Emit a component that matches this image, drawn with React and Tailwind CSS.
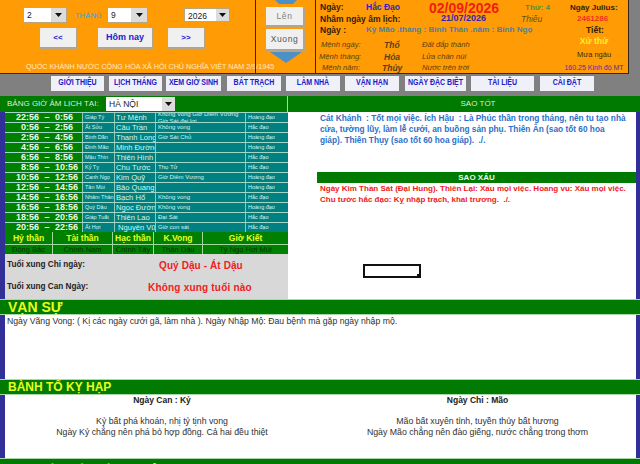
import React from "react";

const rows = [
  ["22:56", "0:56", "Giáp Tý", "Tư Mệnh", "Không Vong Giờ Diêm Vương Giờ Sát đại lợi", "Hoàng đạo"],
  ["0:56", "2:56", "Ất Sửu", "Câu Trần", "Không vong", "Hắc đạo"],
  ["2:56", "4:56", "Bính Dần", "Thanh Long", "Giờ Sát Chủ", "Hoàng đạo"],
  ["4:56", "6:56", "Đinh Mão", "Minh Đường", "", "Hoàng đạo"],
  ["6:56", "8:56", "Mậu Thìn", "Thiên Hình", "", "Hắc đạo"],
  ["8:56", "10:56", "Kỷ Tỵ", "Chu Tước", "Thọ Tử", "Hắc đạo"],
  ["10:56", "12:56", "Canh Ngọ", "Kim Quỹ", "Giờ Diêm Vương", "Hoàng đạo"],
  ["12:56", "14:56", "Tân Mùi", "Bảo Quang", "", "Hoàng đạo"],
  ["14:56", "16:56", "Nhâm Thân", "Bạch Hổ", "Không vong", "Hắc đạo"],
  ["16:56", "18:56", "Quý Dậu", "Ngọc Đường", "Không vong", "Hoàng đạo"],
  ["18:56", "20:56", "Giáp Tuất", "Thiên Lao", "Đại Sát", "Hắc đạo"],
  ["20:56", "22:56", "Ất Hợi", "Nguyên Vũ", "Giờ con sát", "Hắc đạo"],
];

const nav = [
  ["GIỚI THIỆU", "w-[53px] ml-[51px]"],
  ["LỊCH THÁNG", "w-[53px] ml-[5px]"],
  ["XEM GIỜ SINH", "w-[55px] ml-[4px]"],
  ["BÁT TRẠCH", "w-[54px] ml-[6px]"],
  ["LÀM NHÀ", "w-[54px] ml-[5px]"],
  ["VẬN HẠN", "w-[54px] ml-[5px]"],
  ["NGÀY ĐẶC BIỆT", "w-[61px] ml-[6px]"],
  ["TÀI LIỆU", "w-[63px] ml-[5px]"],
  ["CÀI ĐẶT", "w-[54px] ml-[6px]"],
];

function Select({ value, w, arrow, h = "h-[16px]" }) {
  return (
    <div className={`flex items-stretch border border-[#b8a67e] bg-white ${w} ${h}`}>
      <span className="flex-1 pl-[3px] text-[8.5px] leading-[14px] text-[#222]">{value}</span>
      <span className={`flex items-center justify-center bg-[#dcdcdc] ${arrow}`}>
        <svg width="7" height="4" viewBox="0 0 7 4"><path d="M0 0h7L3.5 4z" fill="#111" /></svg>
      </span>
    </div>
  );
}

function Btn({ children, className, color = "text-[#2020d0] font-bold" }) {
  return (
    <div className={`flex items-center justify-center border-b-2 border-r-2 border-[#b3a58a] bg-[#f0f0f0] ${color} ${className}`}>
      {children}
    </div>
  );
}

function Band({ children, size }) {
  return (
    <div className={`flex h-[16px] items-center border-y border-[#a8d8a8] bg-[#007a00] pl-[8px] font-bold leading-none text-[#e8ff20] ${size}`}>
      {children}
    </div>
  );
}

export default function App() {
  return (
    <div className="relative h-[464px] w-[640px] overflow-hidden bg-white font-['Liberation_Sans',sans-serif]">
      {/* Header */}
      <div className="flex h-[74px] bg-[#808080]">
        <div className="flex w-[629px] border-b border-[#33261a] bg-[#ff9c05]">
          <div className="flex w-[255px] flex-col">
            <div className="flex h-[28px] items-center pl-[23px] pt-[2px]">
              <Select value="2" w="w-[44px]" arrow="w-[15px]" />
              <span className="ml-[8px] w-[32px] text-[7.5px] font-bold leading-[15px] text-[#5fa8b8]">THÁNG</span>
              <Select value="9" w="w-[41px]" arrow="w-[16px]" />
              <span className="w-[36px]" />
              <Select value="2026" w="w-[46px]" arrow="w-[13px]" h="h-[14px]" />
            </div>
            <div className="flex items-start pl-[40px] text-[8px]">
              <Btn className="h-[21px] w-[38px]">&lt;&lt;</Btn>
              <Btn className="ml-[20px] h-[21px] w-[56px] text-[9px]">Hôm nay</Btn>
              <Btn className="ml-[14px] h-[21px] w-[38px]">&gt;&gt;</Btn>
            </div>
            <div className="mt-[13px] whitespace-nowrap pl-[26px] text-[7.2px] leading-[10px] text-[#ffe9c0]">
              QUỐC KHÁNH NƯỚC CỘNG HÒA XÃ HỘI CHỦ NGHĨA VIỆT NAM 2/9/1945
            </div>
          </div>
          <div className="flex w-[61px] flex-col items-center border-x border-[#33261a]">
            <svg width="32" height="4" viewBox="0 0 32 4"><path d="M5 0h22l-4 4H9z" fill="#4d90c8" /></svg>
            <Btn className="mt-[3px] h-[20px] w-[39px] text-[8.5px] tracking-[0.6px]" color="text-[#808080]">Lên</Btn>
            <Btn className="mt-[2px] h-[22px] w-[39px] text-[8.5px] tracking-[0.6px]" color="text-[#555]">Xuong</Btn>
            <svg className="mt-[1px]" width="32" height="11" viewBox="0 0 32 11"><path d="M0 0h32L16 11z" fill="#4d90c8" /></svg>
          </div>
          <div className="flex flex-1 flex-col border-r border-[#33261a] pl-[4px] pt-[1px]">
            <div className="flex h-[13px] items-center whitespace-nowrap font-bold">
              <span className="w-[46px] text-[8.5px] text-[#33200a]">Ngày:</span>
              <span className="w-[63px] text-[8.5px] text-[#2a2ab8]">Hắc Đạo</span>
              <span className="w-[96px] text-[14px] leading-none text-[#f02010]">02/09/2026</span>
              <span className="w-[45px] text-[8px] text-[#4f9040]">Thứ: 4</span>
              <span className="text-[8px] text-[#33200a]">Ngày Julius:</span>
            </div>
            <div className="flex h-[10px] items-center whitespace-nowrap">
              <span className="w-[121px] text-[8.5px] font-bold text-[#33200a]">Nhâm ngày âm lịch:</span>
              <span className="w-[80px] text-[9px] font-bold text-[#3a20b0]">21/07/2026</span>
              <span className="w-[49px] text-[8.5px] italic text-[#6a5010]">Thiếu</span>
              <span className="ml-[7px] text-[8px] font-bold text-[#f03020]">2461286</span>
            </div>
            <div className="flex h-[12px] items-center whitespace-nowrap font-bold">
              <span className="w-[46px] text-[8.5px] text-[#33200a]">Ngày  :</span>
              <span className="w-[206px] text-[8.1px] text-[#4f7ea0]">Kỷ Mão .tháng : Bính Thân .năm : Bính Ngọ</span>
              <span className="ml-[14px] text-[8.5px] text-[#33200a]">Tiết:</span>
            </div>
            <div className="mt-[2px] flex">
              <div className="w-[248px] text-[7.6px] leading-[12px] text-[#5a4010]">
                <div className="flex h-[13px] items-center italic">
                  <span className="w-[64px] pl-[1px]">Mệnh ngày:</span>
                  <b className="w-[38px] text-[8.5px]">Thổ</b>
                  <span>Đất đắp thành</span>
                </div>
                <div className="flex h-[12px] items-center italic">
                  <span className="-ml-[1px] w-[65px]">Mệnh tháng:</span>
                  <b className="w-[38px] text-[8.5px]">Hỏa</b>
                  <span>Lửa chân núi</span>
                </div>
                <div className="flex h-[10px] items-center italic">
                  <span className="w-[62px] pl-[2px]">Mệnh năm:</span>
                  <b className="w-[40px] text-[8.5px]">Thủy</b>
                  <span>Nước trên trời</span>
                </div>
              </div>
              <div className="-mt-[3px] flex w-[52px] flex-col items-center whitespace-nowrap">
                <div className="text-[8.5px] font-bold leading-[12px] text-[#ffee30]">Xử thử</div>
                <div className="mt-[2px] text-[7.5px] leading-[11px] text-[#3a2a10]">Mưa ngâu</div>
                <div className="mt-[2px] text-[7px] leading-[11px] text-[#4a30a0]">160.25 Kinh độ MT</div>
              </div>
            </div>
          </div>
        </div>
      </div>

      {/* Nav */}
      <div className="flex h-[22px] items-start bg-[#808080] pt-[2px]">
        {nav.map(([t, c]) => (
          <div key={t} className={`flex h-[15px] items-center justify-center whitespace-nowrap bg-[#f0f0f8] text-[7px] font-bold text-[#2020c8] ${c}`}>
            <span className="inline-block scale-y-[1.25]">{t}</span>
          </div>
        ))}
      </div>

      {/* Green heading row of both columns */}
      <div className="flex h-[16px] bg-[#007a00]">
        <div className="flex w-[288px] items-center border-l-[5px] border-r border-[#007a00] border-r-[#a8d8a8] pl-[2px] text-[8px] leading-none whitespace-nowrap text-[#d8f0d8]">
          <span className="w-[99px]">BẢNG GIỜ ÂM LỊCH TẠI:</span>
          <span className="flex h-[14px] w-[69px] items-stretch bg-white text-[8.5px] text-[#222]">
            <span className="flex-1 pl-[3px] leading-[14px]">HÀ NỘI</span>
            <span className="flex w-[13px] items-center justify-center bg-[#dcdcdc]">
              <svg width="7" height="4" viewBox="0 0 7 4"><path d="M0 0h7L3.5 4z" fill="#111" /></svg>
            </span>
          </span>
        </div>
        <div className="flex flex-1 items-center justify-center pl-[32px] pr-[4px] text-[8px] leading-none text-[#d8f0d8]">SAO TỐT</div>
      </div>

      {/* Main */}
      <div className="flex h-[187px]">
        <div className="w-[5px] bg-[#303098]" />
        <div className="flex w-[283px] flex-col">
          <div className="flex flex-col">
            {rows.map((r) => (
              <div key={r[0]} className="flex h-[10px] overflow-hidden border-t border-[#a0d8c8] text-[#d8f4ee]">
                <div className="flex w-[78px] items-center border-r border-[#90c8b8] bg-[#008000] text-[9px] font-bold text-[#e8ffe8]">
                  <span className="w-[34px] text-right">{r[0]}</span>
                  <span className="w-[16px] text-center">–</span>
                  <span>{r[1]}</span>
                </div>
                <div className="flex w-[32px] items-center border-r border-[#90c8b8] bg-[#008080] pl-[2px] text-[5.5px] whitespace-nowrap">{r[2]}</div>
                <div className={`flex w-[41px] items-center overflow-hidden border-r border-[#90c8b8] bg-[#008080] text-[7.6px] whitespace-nowrap ${r[3] === "Nguyên Vũ" ? "pl-[3px]" : "pl-[1px]"}`}>{r[3]}</div>
                <div className="flex w-[90px] items-center overflow-hidden border-r border-[#90c8b8] bg-[#008080] pl-[2px] text-[6px] leading-[7px]">{r[4]}</div>
                <div className="flex flex-1 items-center bg-[#008080] pl-[2px] text-[5.5px]">{r[5]}</div>
              </div>
            ))}
          </div>
          <div className="flex h-[12px] bg-[#008000] text-[8.5px] font-bold leading-[12px] text-[#e8ff20]">
            <div className="w-[48px] border-r border-[#a0d8a0] text-center">Hỷ thần</div>
            <div className="w-[60px] border-r border-[#a0d8a0] text-center">Tài thần</div>
            <div className="w-[41px] border-r border-[#a0d8a0] text-center">Hạc thần</div>
            <div className="w-[49px] border-r border-[#a0d8a0] text-center">K.Vong</div>
            <div className="flex-1 text-center">Giờ Kiết</div>
          </div>
          <div className="flex h-[10px] border-t border-[#a0d8a0] bg-[#008000] text-[7.5px] leading-[9px] text-[#063006]">
            <div className="w-[48px] border-r border-[#a0d8a0] text-center whitespace-nowrap">Đông Bắc</div>
            <div className="w-[60px] border-r border-[#a0d8a0] text-center whitespace-nowrap">Chính Nam</div>
            <div className="w-[41px] border-r border-[#a0d8a0] text-center whitespace-nowrap">Chính Tây</div>
            <div className="w-[49px] border-r border-[#a0d8a0] text-center whitespace-nowrap">Thân Dậu</div>
            <div className="flex-1 text-center whitespace-nowrap">Tý Ngọ Hợi Mùi</div>
          </div>
          <div className="flex flex-1 flex-col bg-[#d8d8d8] pl-[2px]">
            <div className="flex h-[22px] items-center whitespace-nowrap">
              <span className="w-[89px] text-[8.2px] font-bold text-[#222]">Tuổi xung Chi ngày:</span>
              <span className="ml-[63px] text-[10px] font-bold tracking-[0.1px] text-[#f02020]">Quý Dậu - Át Dậu</span>
            </div>
            <div className="flex h-[22px] items-center whitespace-nowrap">
              <span className="w-[89px] text-[8.2px] font-bold text-[#222]">Tuổi xung Can Ngày:</span>
              <span className="ml-[52px] text-[10px] font-bold tracking-[0.2px] text-[#f02020]">Không xung tuổi nào</span>
            </div>
          </div>
        </div>
        <div className="flex w-[348px] flex-col">
          <div className="h-[60px] whitespace-pre-wrap pl-[32px] pr-[10px] pt-[1px] text-[8.3px] font-bold leading-[11px] text-[#2a70c8]">
            {"Cát Khánh  : Tốt mọi việc. Ích Hậu  : Là Phúc thần trong tháng, nên tu tạo nhà cửa, tường lũy, làm lễ cưới, an buồng sản phụ. Thiên Ân (sao tốt 60 hoa giáp). Thiên Thụy (sao tốt 60 hoa giáp).  ./."}
          </div>
          <div className="ml-[29px] flex h-[11px] items-center justify-center bg-[#007a00] text-[8px] font-bold leading-none text-[#e8f8e8]">SAO XẤU</div>
          <div className="whitespace-pre-wrap pl-[32px] pr-[6px] text-[8px] font-bold leading-[11px] text-[#f01818]">
            {"Ngày Kim Thần Sát (Đại Hung). Thiên Lại: Xấu mọi việc. Hoang vu: Xấu mọi việc. Chu tước hắc đạo: Kỵ nhập trạch, khai trương.  ./."}
          </div>
        </div>
        <div className="w-[4px] bg-[#303098]" />
      </div>

      {/* Van su */}
      <Band size="text-[14px]">VẠN SỰ</Band>
      <div className="flex h-[64px]">
        <div className="w-[5px] bg-[#303098]" />
        <div className="flex-1 whitespace-nowrap pl-[2px] text-[8.7px] leading-[12px] text-[#303030]">
          Ngày Vãng Vong: ( Kị các ngày cưới gã, làm nhà ). Ngày Nhập Mộ: Đau bệnh mà gặp ngày nhập mộ.
        </div>
        <div className="w-[4px] bg-[#303098]" />
      </div>

      {/* Banh to */}
      <Band size="text-[12px]">BÀNH TỔ KỴ HẠP</Band>
      <div className="flex h-[63px] text-center text-[8.75px] leading-[11px] text-[#303030]">
        <div className="w-[5px] bg-[#303098]" />
        <div className="w-[314px]">
          <div className="mb-[10px] text-[8.5px] font-bold text-[#222]">Ngày Can : Kỷ</div>
          <div>Kỷ bất phá khoán, nhị tỷ tịnh vong</div>
          <div>Ngày Kỷ chẳng nên phá bỏ hợp đồng. Cả hai đều thiệt</div>
        </div>
        <div className="w-[317px]">
          <div className="mb-[10px] text-[8.5px] font-bold text-[#222]">Ngày Chi : Mão</div>
          <div>Mão bất xuyên tỉnh, tuyền thủy bất hương</div>
          <div>Ngày Mão chẳng nên đào giếng, nước chẳng trong thơm</div>
        </div>
        <div className="w-[4px] bg-[#303098]" />
      </div>

      <div className="h-[20px] whitespace-nowrap border-t border-[#a8d8a8] bg-[#007a00] pl-[8px] pt-[4px] text-[12px] font-bold leading-[16px] text-[#e8ff20]">
        NHỊ THẬP BÁT TÚ 12 NGÔI SAO
      </div>

      {/* floating empty selection box over the content */}
      <div className="absolute left-[363px] top-[264px] h-[14px] w-[58px] border-2 border-[#111] bg-white">
        <div className="absolute -bottom-[2px] -right-[2px] h-[4px] w-[4px] bg-[#111]" />
      </div>
    </div>
  );
}
